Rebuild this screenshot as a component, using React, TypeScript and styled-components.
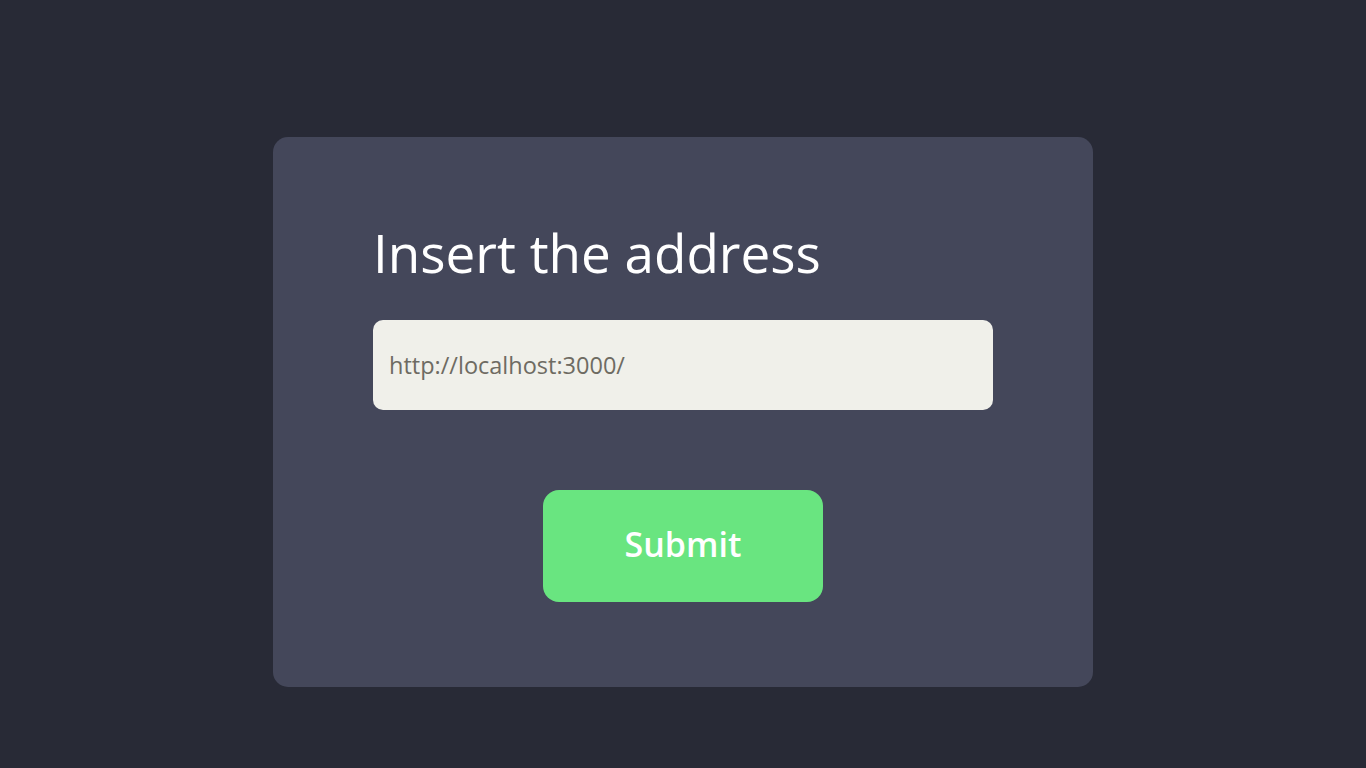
import React from "react";
import styled, { createGlobalStyle } from "styled-components";

const Global = createGlobalStyle`
  html, body { margin: 0; padding: 0; background: #282a36; }
  body { font-family: "Open Sans", "Noto Sans", sans-serif; }
`;

const Page = styled.div`
  min-height: 768px;
  box-sizing: border-box;
  padding-top: 137px;
  display: flex;
  justify-content: center;
  align-items: flex-start;
`;

const Card = styled.form`
  width: 820px;
  height: 550px;
  box-sizing: border-box;
  background: #44475a;
  border-radius: 15px;
  padding: 80px 100px 85px;
  display: flex;
  flex-direction: column;
`;

const Title = styled.h1`
  margin: 0;
  font-weight: 400;
  font-size: 53px;
  line-height: 72px;
  color: #ffffff;
  letter-spacing: 0;
`;

const Input = styled.input`
  margin-top: 31px;
  width: 620px;
  height: 90px;
  box-sizing: border-box;
  border: none;
  outline: none;
  border-radius: 10px;
  background: #f0f0ea;
  padding: 0 16px;
  font-family: inherit;
  font-size: 23.5px;
  color: #6e6b62;
  &::placeholder { color: #6e6b62; }
`;

const Submit = styled.button`
  margin: 80px auto 0;
  width: 280px;
  height: 112px;
  border: none;
  border-radius: 16px;
  background: #69e580;
  color: #ffffff;
  font-family: inherit;
  font-weight: 600;
  font-size: 34px;
  line-height: 1;
  padding: 0 0 4px;
  cursor: pointer;
`;

export default function App() {
  return (
    <>
      <Global />
      <Page>
        <Card onSubmit={(e) => e.preventDefault()}>
          <Title>Insert the address</Title>
          <Input type="text" placeholder="http://localhost:3000/" />
          <Submit type="submit">Submit</Submit>
        </Card>
      </Page>
    </>
  );
}
